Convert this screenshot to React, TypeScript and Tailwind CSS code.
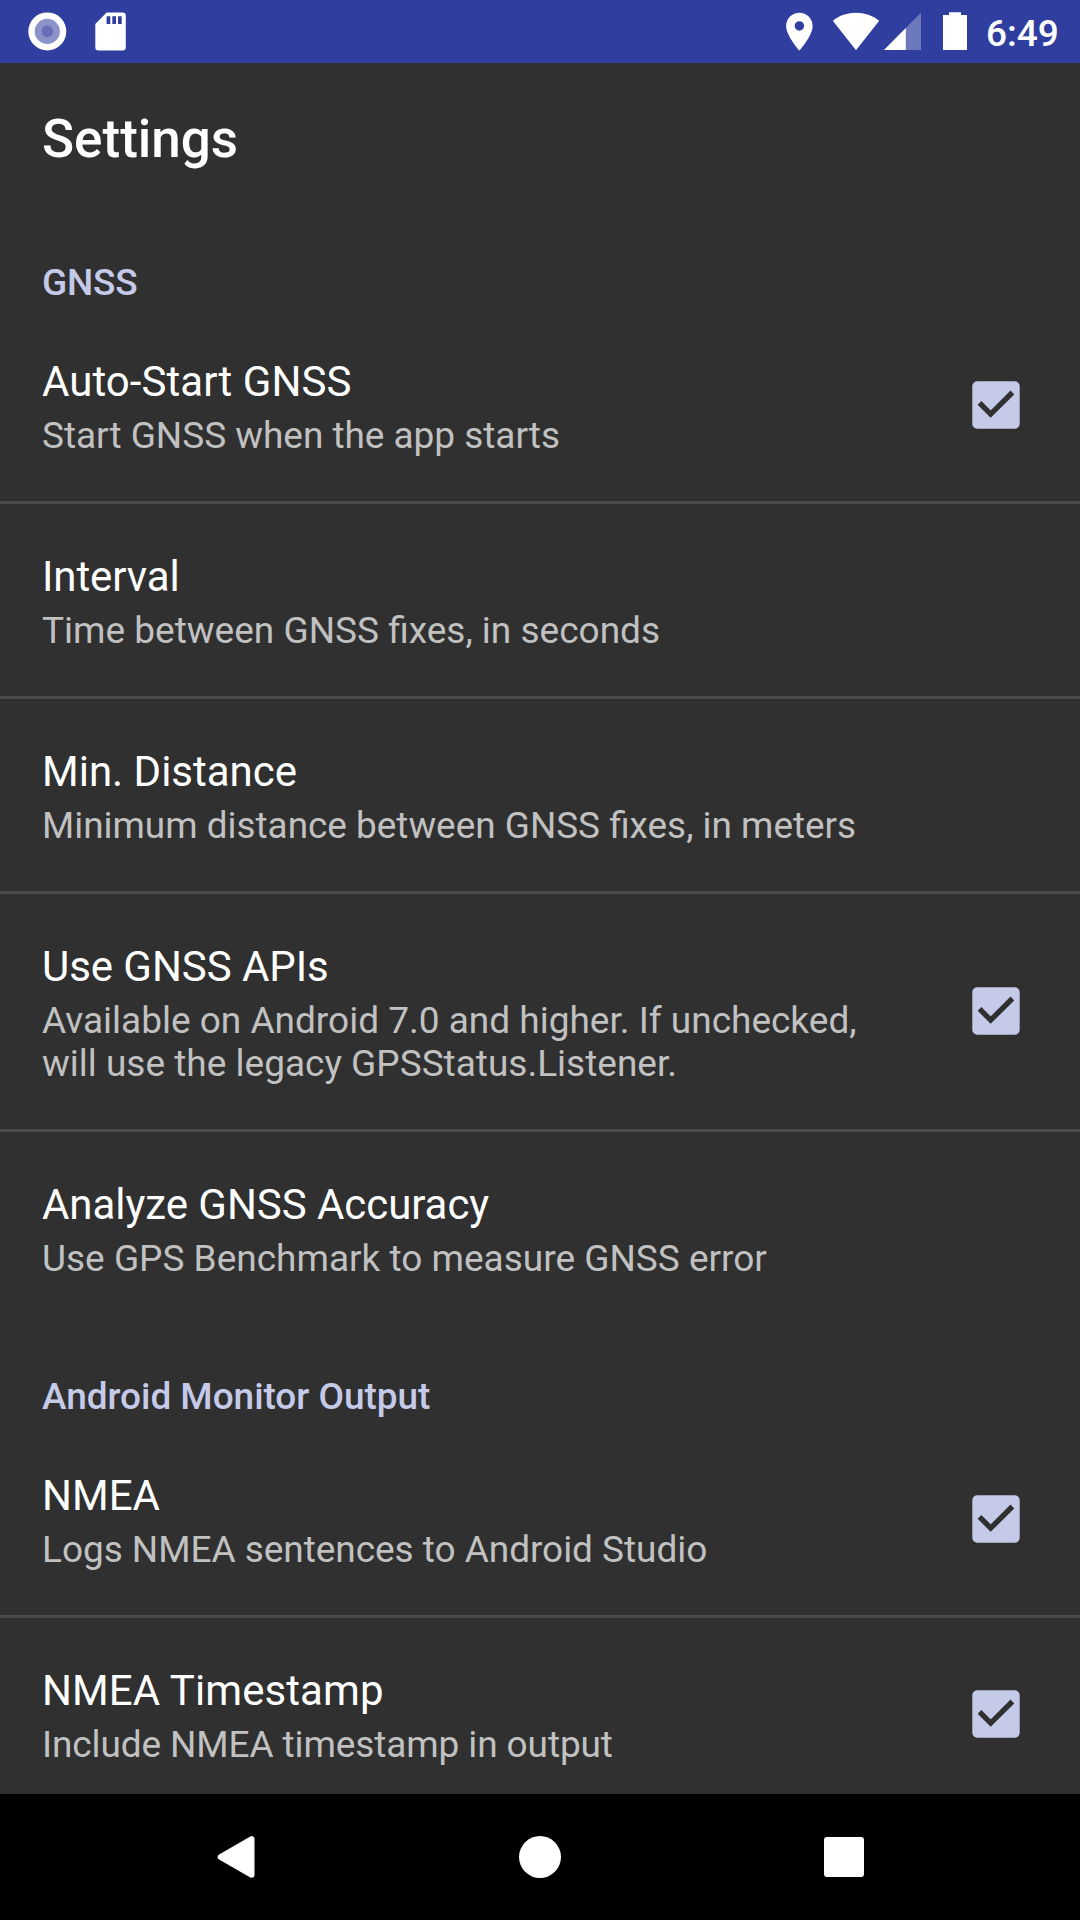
import React from "react";

type Item = {
  title: string;
  lines: string[];
  checked?: boolean;
  height: string;
  last?: boolean;
  titleClass?: string;
  summaryClass?: string;
};

const gnss: Item[] = [
  {
    title: "Auto-Start GNSS",
    lines: ["Start GNSS when the app starts"],
    checked: true,
    height: "h-[195px]",
    titleClass: "tracking-[0.06px]",
    summaryClass: "text-[37px] tracking-[-0.04px]",
  },
  { title: "Interval", lines: ["Time between GNSS fixes, in seconds"], height: "h-[195px]", titleClass: "tracking-[-0.1px]" },
  {
    title: "Min. Distance",
    lines: ["Minimum distance between GNSS fixes, in meters"],
    height: "h-[195px]",
    summaryClass: "text-[36.9px]",
  },
  {
    title: "Use GNSS APIs",
    lines: ["Available on Android 7.0 and higher. If unchecked,", "will use the legacy GPSStatus.Listener."],
    checked: true,
    height: "h-[238px]",
    titleClass: "tracking-[-0.06px]",
  },
  {
    title: "Analyze GNSS Accuracy",
    lines: ["Use GPS Benchmark to measure GNSS error"],
    height: "h-[192px]",
    last: true,
    titleClass: "tracking-[-0.05px]",
  },
];

const output: Item[] = [
  {
    title: "NMEA",
    lines: ["Logs NMEA sentences to Android Studio"],
    checked: true,
    height: "h-[195px]",
    summaryClass: "text-[37px] tracking-[-0.045px]",
  },
  {
    title: "NMEA Timestamp",
    lines: ["Include NMEA timestamp in output"],
    checked: true,
    height: "h-[192px]",
    last: true,
    titleClass: "tracking-[0.07px]",
    summaryClass: "text-[37px] tracking-[-0.11px]",
  },
];

function StatusBar() {
  return (
    <div className="flex h-[63px] shrink-0 items-center justify-between bg-[#303f9f] pr-[22px] pl-7">
      <div className="flex h-full gap-7">
        <svg className="h-[63px] w-[39px]" viewBox="28 0 39 63">
          <circle cx="47.3" cy="31.4" r="19" fill="#fff" />
          <circle cx="47.3" cy="31.4" r="12.6" fill="#8b93cb" />
          <circle cx="47.3" cy="31.4" r="5.8" fill="#686fb8" />
        </svg>
        <svg className="h-[63px] w-[32px]" viewBox="95 0 32 63">
          <path fill="#fff" d="M106.6 12.6H122.6A3.2 3.2 0 0 1 125.8 15.8V47.2A3.2 3.2 0 0 1 122.6 50.4H98.5A3.2 3.2 0 0 1 95.3 47.2V24Z" />
          <path fill="#303f9f" d="M106.6 16.2h3.7v7.8h-3.7zM112.3 16.2h3.7v7.8h-3.7zM118 16.2h3.7v7.8h-3.7z" />
        </svg>
      </div>
      <div className="flex h-full items-center">
        <svg className="mr-[19px] h-[63px] w-[28px]" viewBox="786 0 28 63">
          <path
            fill="#fff"
            fillRule="evenodd"
            transform="translate(776.7 8.9) scale(1.89)"
            d="M12 2C8.13 2 5 5.13 5 9c0 5.25 7 13 7 13s7-7.75 7-13c0-3.87-3.13-7-7-7zm0 9.5a2.5 2.5 0 0 1 0-5 2.5 2.5 0 0 1 0 5z"
          />
        </svg>
        <svg className="mr-1 h-[63px] w-[47px]" viewBox="833 0 47 63">
          <path fill="#fff" d="M832.8 20.8C839.3 15.6 847.3 12.8 856 12.8S872.7 15.6 879.2 20.8L856 50.2Z" />
        </svg>
        <svg className="mr-[22px] h-[63px] w-[37px]" viewBox="884 0 37 63">
          <path fill="#fff" fillOpacity="0.3" d="M921 12.8V50H884Z" />
          <path fill="#fff" d="M905.8 28.1V50H884Z" />
        </svg>
        <svg className="mr-[19px] h-[63px] w-[24px]" viewBox="943 0 24 63">
          <path fill="#fff" d="M949 12.2h12v2.8h6v35h-24V15h6z" />
        </svg>
        <div className="mt-[3px] w-[72px] text-[37px] leading-[43px] font-medium whitespace-nowrap text-white">6:49</div>
      </div>
    </div>
  );
}

function Checkbox() {
  return (
    <svg className="mb-px h-12 w-12 shrink-0" viewBox="0 0 48 48">
      <rect x="0.3" y="0.3" width="47.4" height="47.4" rx="5" fill="#c5cae9" />
      <path d="M7.5 21.9L18.7 33.1L40.4 11.5" fill="none" stroke="#303030" strokeWidth="5.3" />
    </svg>
  );
}

function Row({ item }: { item: Item }) {
  return (
    <div
      className={`flex shrink-0 items-center justify-between pr-[60px] pl-[42px] ${item.height} ${
        item.last ? "" : "border-b-3 border-[#4a4a4a]"
      }`}
    >
      <div className="self-start pt-12 whitespace-nowrap">
        <div className={`mb-2 text-[42px] leading-[49px] text-white ${item.titleClass ?? ""}`}>{item.title}</div>
        <div className={item.summaryClass ?? "text-[37px]"}>
          {item.lines.map((line) => (
            <div key={line} className="leading-[43px] text-[#c1c1c1]">
              {line}
            </div>
          ))}
        </div>
      </div>
      {item.checked && <Checkbox />}
    </div>
  );
}

function NavBar() {
  return (
    <div className="flex h-[126px] shrink-0 items-center justify-between bg-black px-[215px]">
      <svg className="h-[42px] w-[42px]" viewBox="0 0 42 42">
        <path d="M5.5 21L36.7 3V39Z" fill="#fff" stroke="#fff" strokeWidth="5.6" strokeLinejoin="round" />
      </svg>
      <div className="h-[42px] w-[42px] rounded-full bg-white" />
      <div className="flex h-[42px] w-[42px] items-center justify-center">
        <div className="h-10 w-10 rounded-[3px] bg-white" />
      </div>
    </div>
  );
}

export default function App() {
  return (
    <div className="flex h-[1920px] w-[1080px] flex-col overflow-hidden bg-[#303030] font-['Roboto',sans-serif]">
      <StatusBar />
      <div className="h-[1731px] shrink-0 overflow-hidden">
        <div className="flex h-[152px] items-center pl-[42px] text-[53px] leading-[62px] font-medium text-white">Settings</div>
        <div className="flex h-[94px] items-end pb-[5px] pl-[42px] text-[37px] leading-[43px] font-medium tracking-[-0.2px] text-[#c5cae9]">
          GNSS
        </div>
        {gnss.map((i) => (
          <Row key={i.title} item={i} />
        ))}
        <div className="flex h-[99px] items-end pb-[5px] pl-[42px] text-[37px] leading-[43px] font-medium tracking-[-0.05px] text-[#c5cae9]">
          Android Monitor Output
        </div>
        {output.map((i) => (
          <Row key={i.title} item={i} />
        ))}
      </div>
      <NavBar />
    </div>
  );
}
